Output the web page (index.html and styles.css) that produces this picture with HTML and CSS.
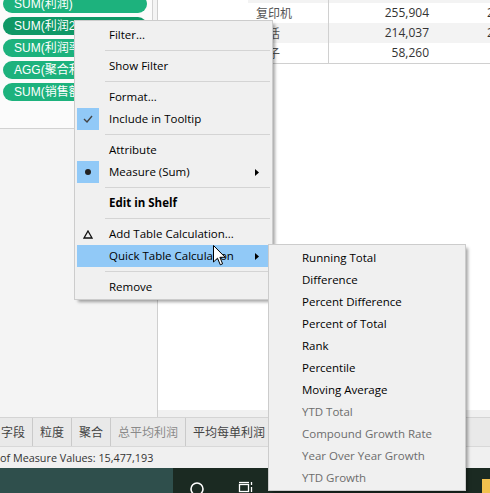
FILE: index.html
```html
<!DOCTYPE html>
<html>
<head>
<meta charset="utf-8">
<link rel="stylesheet" href="styles.css">
</head>
<body>
<div class="app">
  <div class="main">
    <div class="left">
      <div class="pillcard">
        <div class="pills">
          <div class="pill">SUM(利润)</div>
          <div class="pill sel">SUM(利润2019)</div>
          <div class="pill">SUM(利润率)</div>
          <div class="pill">AGG(聚合利润)</div>
          <div class="pill">SUM(销售额)</div>
        </div>
      </div>
    </div>
    <div class="view">
      <div class="sheet">
        <div class="grid">
          <div class="row g"><div class="c h"></div><div class="c v"></div><div class="c v2"></div></div>
          <div class="row"><div class="c h">复印机</div><div class="c v">255,904</div><div class="c v2">2</div></div>
          <div class="row g"><div class="c h">电话</div><div class="c v">214,037</div><div class="c v2">2</div></div>
          <div class="row last"><div class="c h">桌子</div><div class="c v">58,260</div><div class="c v2"></div></div>
        </div>
      </div>
    </div>
  </div>
  <div class="tabs">
    <div class="tab first">字段</div>
    <div class="tab">粒度</div>
    <div class="tab">聚合</div>
    <div class="tab dim">总平均利润</div>
    <div class="tab">平均每单利润</div>
  </div>
  <div class="status">of Measure Values: 15,477,193</div>
  <div class="taskbar">
    <div class="tb-search"></div>
    <div class="tb-rest">
      <svg class="tb-icons" width="317" height="25" viewBox="0 0 317 25">
        <circle cx="24" cy="21" r="6" fill="none" stroke="#ffffff" stroke-width="1.6"/>
        <path d="M66 14.5 H76" stroke="#ffffff" stroke-width="1.3"/>
        <rect x="66.5" y="16.5" width="9" height="7" fill="none" stroke="#ffffff" stroke-width="1.3"/>
        <path d="M78.5 14 V17 M78.5 19 V24" stroke="#ffffff" stroke-width="1.3"/>
        <rect x="309" y="11" width="8" height="14" fill="#f2c14e"/>
      </svg>
    </div>
  </div>
</div>

<div class="menu mainmenu">
  <div class="item">Filter...</div>
  <div class="sep"></div>
  <div class="item">Show Filter</div>
  <div class="sep"></div>
  <div class="item">Format...</div>
  <div class="item"><span class="ico on"><svg width="10" height="8" viewBox="0 0 10 8"><path d="M1 4 L4 7 L9 1" fill="none" stroke="#444" stroke-width="1.4"/></svg></span>Include in Tooltip</div>
  <div class="sep"></div>
  <div class="item">Attribute</div>
  <div class="item"><span class="ico on"><svg width="8" height="8" viewBox="0 0 8 8"><circle cx="4" cy="4" r="3" fill="#222"/></svg></span>Measure (Sum)<svg class="arrow" width="4" height="7" viewBox="0 0 4 7"><path d="M0 0 L4 3.5 L0 7 Z" fill="#000"/></svg></div>
  <div class="sep"></div>
  <div class="item bold">Edit in Shelf</div>
  <div class="sep"></div>
  <div class="item"><span class="ico"><svg width="10" height="9" viewBox="0 0 10 9"><path d="M5 1 L9 8 H1 Z" fill="none" stroke="#111" stroke-width="1.3"/></svg></span>Add Table Calculation...</div>
  <div class="item hl">Quick Table Calculation<svg class="arrow" width="4" height="7" viewBox="0 0 4 7"><path d="M0 0 L4 3.5 L0 7 Z" fill="#000"/></svg></div>
  <div class="sep"></div>
  <div class="item">Remove</div>
</div>

<div class="menu submenu">
  <div class="item">Running Total</div>
  <div class="item">Difference</div>
  <div class="item">Percent Difference</div>
  <div class="item">Percent of Total</div>
  <div class="item">Rank</div>
  <div class="item">Percentile</div>
  <div class="item">Moving Average</div>
  <div class="item off">YTD Total</div>
  <div class="item off">Compound Growth Rate</div>
  <div class="item off">Year Over Year Growth</div>
  <div class="item off">YTD Growth</div>
</div>

<svg class="cursor" width="14" height="21" viewBox="0 0 14 21"><path d="M0.5 0.5 L0.5 17 L4.5 13.2 L7.3 19.8 L9.6 18.8 L6.9 12.3 L12.2 12.3 Z" fill="#ffffff" stroke="#000" stroke-width="1"/></svg>
</body>
</html>
```

FILE: styles.css
```css
body {
  margin: 0;
  width: 490px;
  height: 493px;
  overflow: hidden;
  position: relative;
  font-family: "Open Sans", "Noto Sans CJK SC", sans-serif;
  background: #f0f0f0;
}

.app {
  display: flex;
  flex-direction: column;
  height: 493px;
}

.main {
  display: flex;
  height: 417px;
}

.left {
  width: 158px;
  background: #f4f4f4;
  border-right: 1px solid #cfcfcf;
  box-sizing: border-box;
  flex-shrink: 0;
}

.pillcard {
  width: 153px;
  height: 129px;
  box-sizing: border-box;
  background: #fbfbfb;
  border-right: 1px solid #d2d2d2;
  border-bottom: 1px solid #d2d2d2;
  overflow: hidden;
}

.pills {
  display: flex;
  flex-direction: column;
  gap: 4px;
  margin-top: -5px;
  padding-left: 3px;
}

.pill {
  width: 144px;
  height: 18px;
  border-radius: 9px;
  background: #1db27d;
  color: #ffffff;
  font-family: "Liberation Sans", "Noto Sans CJK SC", sans-serif;
  font-size: 12px;
  line-height: 18px;
  padding-left: 11px;
  box-sizing: border-box;
  white-space: nowrap;
  overflow: hidden;
}

.pill.sel {
  background: #0f9866;
}

.view {
  flex: 1;
  background: #f0f0f0;
  padding-bottom: 7px;
  display: flex;
  flex-direction: column;
  overflow: hidden;
}

.sheet {
  flex: 1;
  background: #ffffff;
  overflow: hidden;
}

.grid {
  margin-left: 90px;
  margin-top: -17px;
  display: flex;
  flex-direction: column;
  width: 400px;
}

.row {
  display: flex;
  height: 20px;
  font-size: 12px;
  line-height: 20px;
  color: #333;
}

.row.g {
  background: #f3f3f3;
}

.row.last {
  border-bottom: 1px solid #d0d0d0;
}

.c {
  white-space: nowrap;
  box-sizing: border-box;
}

.c.h {
  width: 80px;
  padding-left: 8px;
  color: #555;
  font-family: "Noto Sans CJK SC", sans-serif;
}

.c.v {
  width: 108px;
  border-left: 1px solid #d0d0d0;
  text-align: right;
  padding-right: 7px;
}

.c.v2 {
  padding-left: 51px;
}

.tabs {
  height: 30px;
  box-sizing: border-box;
  border-top: 1px solid #d4d4d4;
  border-bottom: 1px solid #d8d8d8;
  background: #e9e9e9;
  display: flex;
  font-family: "Noto Sans CJK SC", sans-serif;
  font-size: 12px;
  color: #444;
}

.tab {
  padding: 0 7px;
  line-height: 28px;
  border-right: 1px solid #cacaca;
  white-space: nowrap;
}

.tab.first {
  padding-left: 1px;
}

.tab.dim {
  color: #8a8a8a;
}

.status {
  height: 21px;
  background: #f0f0f0;
  font-size: 10.8px;
  line-height: 21px;
  color: #333;
  white-space: nowrap;
}

.taskbar {
  height: 25px;
  display: flex;
}

.tb-search {
  width: 173px;
  background: #2f4f4c;
}

.tb-rest {
  flex: 1;
  background: #1b2a22;
  overflow: hidden;
}

.tb-icons {
  display: block;
}

.menu {
  position: absolute;
  background: #f0f0f0;
  border: 1px solid #cccccc;
  box-shadow: 3px 3px 3px -1px rgba(0, 0, 0, 0.35);
  font-size: 11.5px;
  color: #000;
}

.mainmenu {
  left: 74px;
  top: 20px;
  width: 197px;
  padding: 3px 0 1px;
}

.submenu {
  left: 268px;
  top: 244px;
  width: 196px;
  padding: 2px 0 1px;
}

.item {
  position: relative;
  height: 22px;
  line-height: 22px;
  margin: 0 2px;
  padding-left: 32px;
  white-space: nowrap;
}

.submenu .item {
  padding-left: 31px;
}

.item.bold {
  font-weight: bold;
}

.item.hl {
  background: #91c9f7;
}

.item.off {
  color: #6d6d6d;
}

.sep {
  height: 1px;
  background: #d4d4d4;
  margin: 4px 2px 4px 30px;
}

.ico {
  position: absolute;
  left: 0;
  top: 0;
  width: 22px;
  height: 22px;
  display: flex;
  align-items: center;
  justify-content: center;
}

.ico.on {
  background: #91c9f7;
}

.arrow {
  position: absolute;
  right: 11px;
  top: 8px;
}

.cursor {
  position: absolute;
  left: 213px;
  top: 245px;
}
```
